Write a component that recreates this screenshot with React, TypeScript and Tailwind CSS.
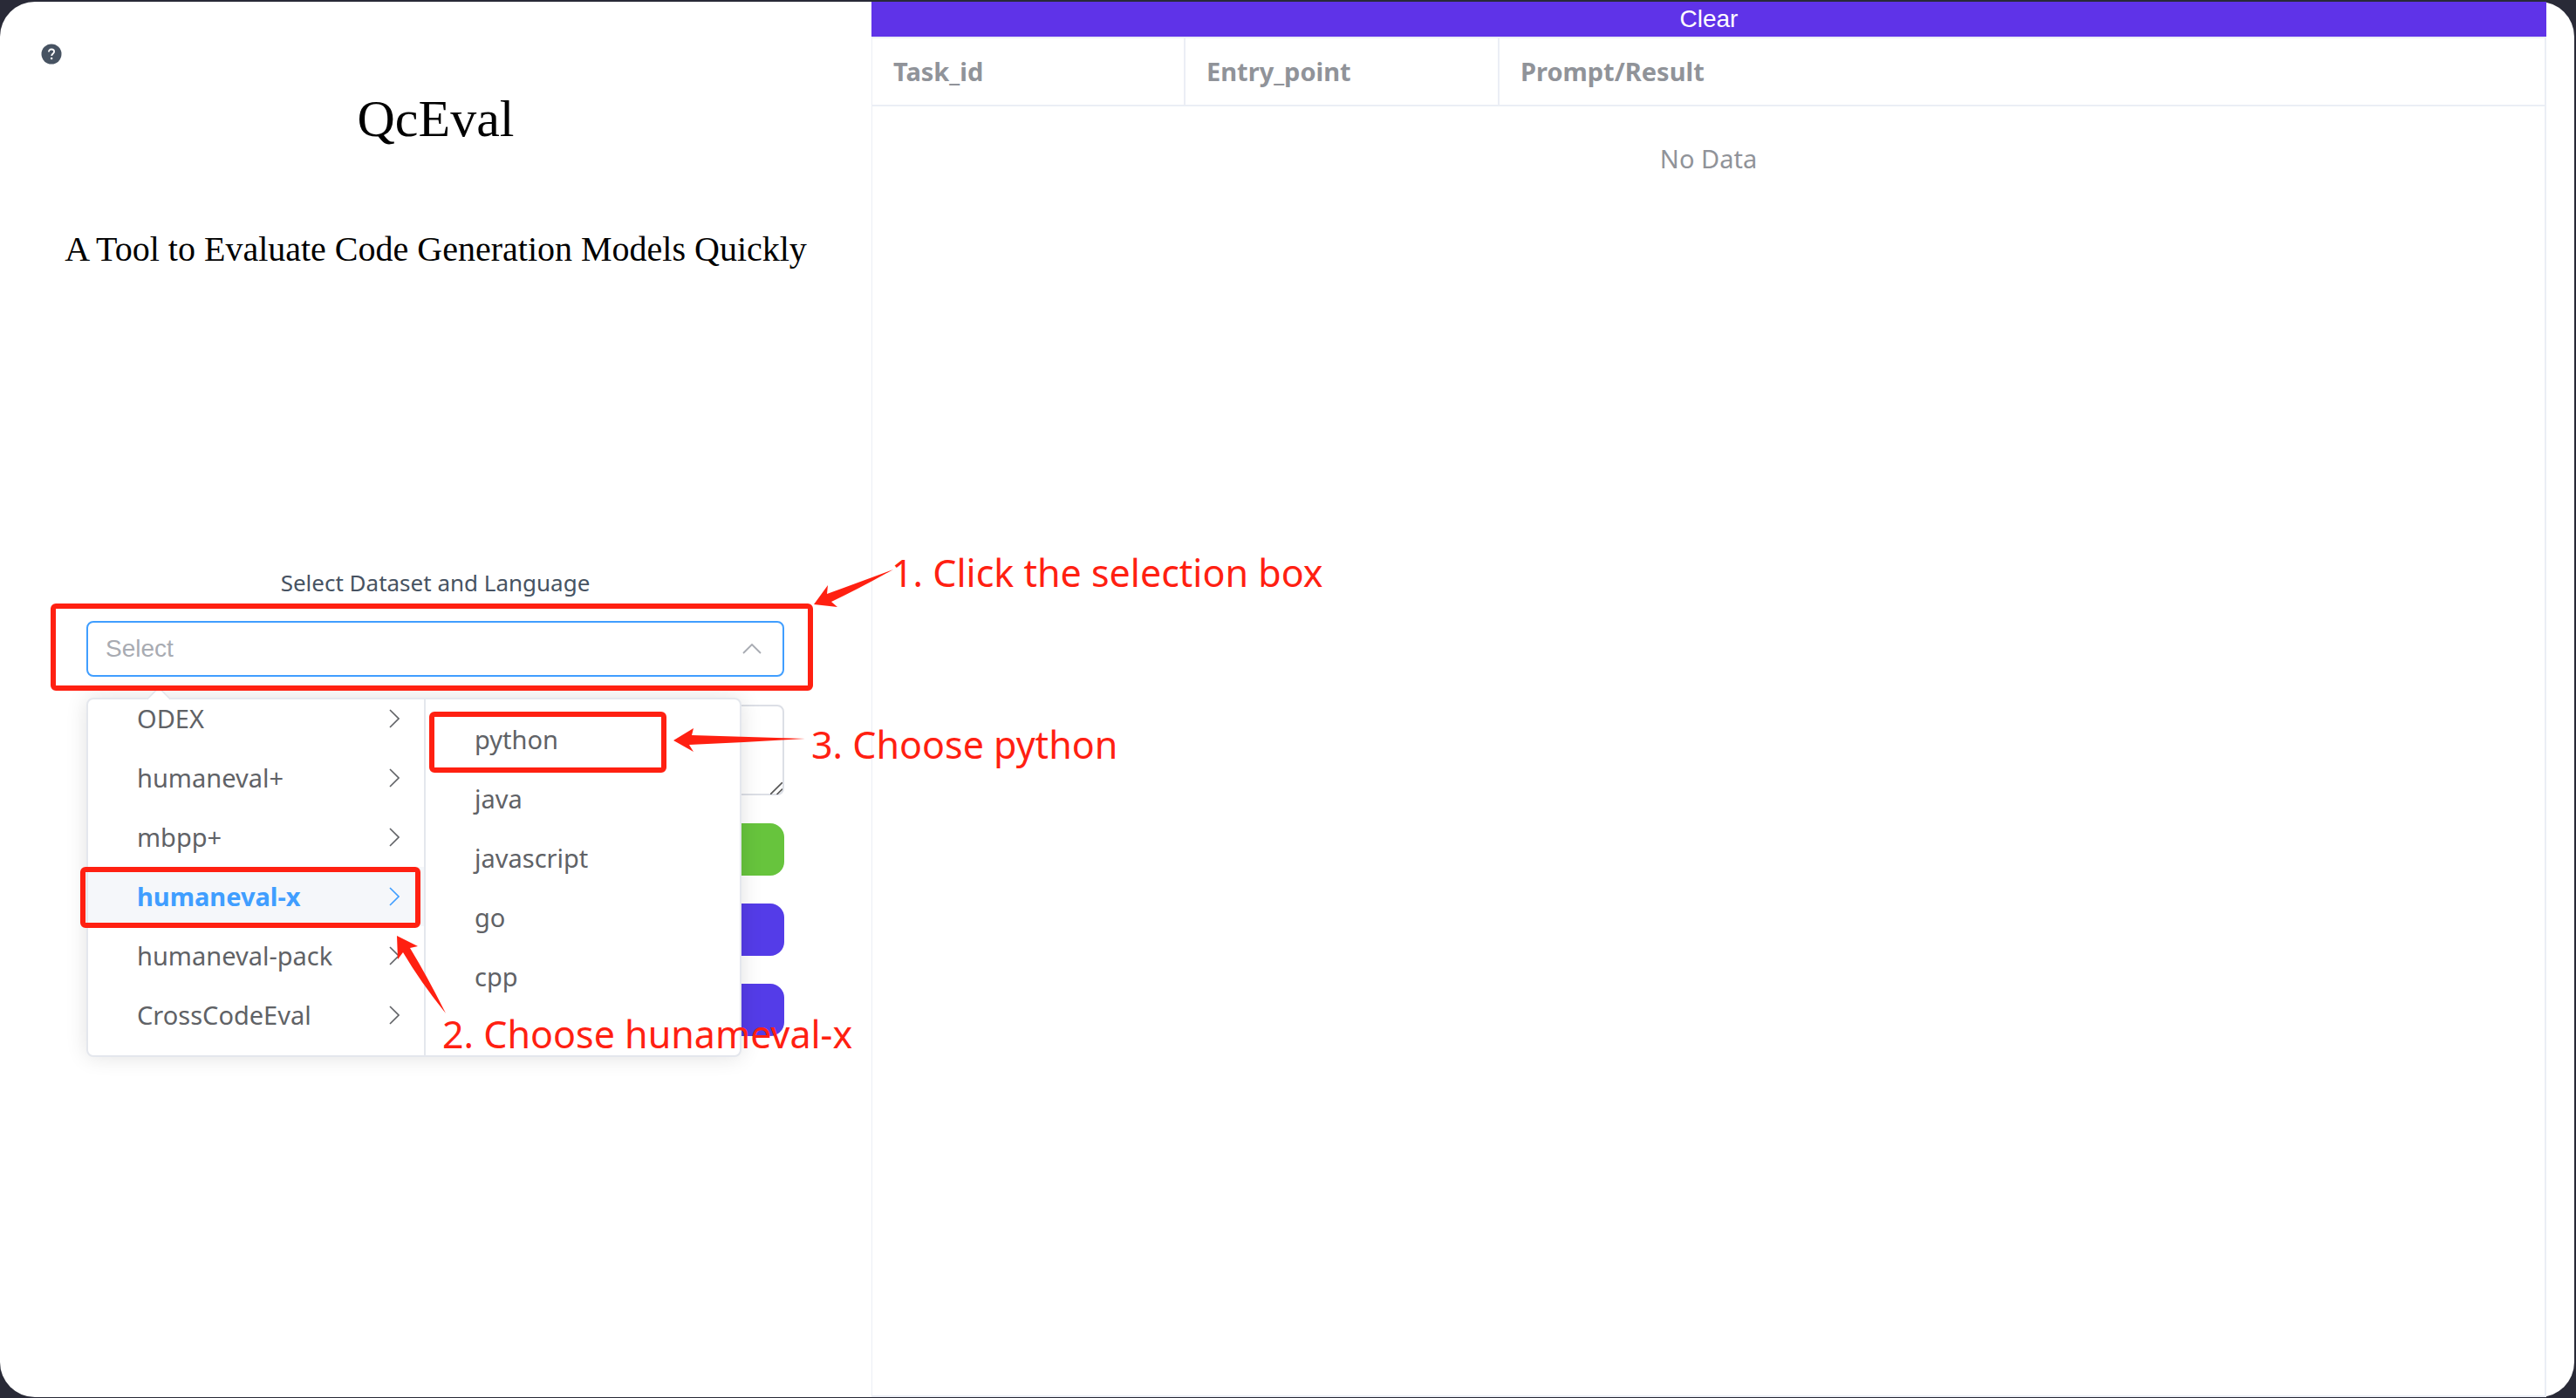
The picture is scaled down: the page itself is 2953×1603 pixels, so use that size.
import React from "react";

const datasets = ["ODEX", "humaneval+", "mbpp+", "humaneval-x", "humaneval-pack", "CrossCodeEval"];
const languages = ["python", "java", "javascript", "go", "cpp"];
const activeDataset = "humaneval-x";

function HelpIcon() {
  return (
    <svg viewBox="0 0 24 24" className="size-6" aria-hidden="true">
      <circle cx="12" cy="12" r="11.5" fill="#475362" />
      <path
        d="M8.9 9.6c0-1.9 1.3-3.1 3.1-3.1s3.1 1.1 3.1 2.8c0 2.1-2.9 2.4-2.9 4.7"
        fill="none"
        stroke="#fff"
        strokeWidth="1.8"
      />
      <circle cx="12.1" cy="17" r="1.3" fill="#fff" />
    </svg>
  );
}

function ChevronRight() {
  return (
    <svg viewBox="0 0 12 22" className="h-[22px] w-3 shrink-0" fill="none" stroke="currentColor" strokeWidth="1.6" aria-hidden="true">
      <path d="M1 1l10 10L1 21" />
    </svg>
  );
}

function ChevronUp() {
  return (
    <svg viewBox="0 0 22 12" className="h-3 w-[22px]" fill="none" stroke="#a8abb2" strokeWidth="1.8" aria-hidden="true">
      <path d="M1 11L11 1l10 10" />
    </svg>
  );
}

function Frame({ className }: { className: string }) {
  return <span aria-hidden="true" className={`pointer-events-none absolute z-20 rounded-md border-6 border-[#ff2011] ${className}`} />;
}

function Note({ className, children }: { className: string; children: React.ReactNode }) {
  return (
    <p className={`pointer-events-none absolute z-30 text-[43px] leading-[60px] whitespace-nowrap text-[#ff2011] ${className}`}>
      {children}
    </p>
  );
}

function Cascader() {
  return (
    <div className="relative">
      <Frame className="-top-5 -right-[33px] -bottom-4 -left-[41px]" />
      <svg viewBox="0 0 92 44" className="pointer-events-none absolute -top-[59px] left-[834px] z-30 h-11 w-[92px]" fill="#ff2011" aria-hidden="true">
        <path d="M0 40L16 18L15 28Q48 16 91 0Q52 22 20 37L27 43Z" />
      </svg>
      <Note className="-top-[85px] left-[923px]">1. Click the selection box</Note>

      <div className="flex h-16 items-center rounded-lg border-2 border-[#409eff] bg-white pr-6 pl-5">
        <input
          id="dataset"
          role="combobox"
          aria-expanded="true"
          aria-controls="dataset-menu"
          readOnly
          placeholder="Select"
          className="min-w-0 flex-1 bg-transparent font-['Liberation_Sans',sans-serif] text-[28px] leading-8 outline-none placeholder:text-[#a8abb2]"
        />
        <ChevronUp />
      </div>

      <div
        id="dataset-menu"
        className="absolute top-[88px] left-0 z-10 flex h-[412px] w-[751px] rounded-lg border-2 border-[#e4e7ed] bg-white text-[29px] text-[#606266] shadow-[0_0_24px_rgba(0,0,0,0.12)]"
      >
        <span aria-hidden="true" className="absolute -top-[11px] left-[71px] size-5 rotate-45 rounded-tl-sm border-t-2 border-l-2 border-[#e4e7ed] bg-white" />
        <div className="relative w-[387px] border-r-2 border-[#e4e7ed]">
          <ul className="flex h-full flex-col justify-end overflow-hidden pb-3">
            {datasets.map((name) => (
              <li key={name} className="relative shrink-0">
                <button
                  type="button"
                  className={`flex h-[68px] w-full items-center justify-between pr-7 pl-14 ${
                    name === activeDataset ? "bg-[#f5f7fa] font-bold text-[#409eff]" : ""
                  }`}
                >
                  <span>{name}</span>
                  <ChevronRight />
                </button>
              </li>
            ))}
          </ul>
          <Frame className="top-[192px] right-1 -left-[9px] h-[70px]" />
          <svg viewBox="0 0 58 92" className="pointer-events-none absolute top-[270px] left-[353px] z-30 h-[92px] w-[58px]" fill="#ff2011" aria-hidden="true">
            <path d="M1 1L25 13L16 15Q36 48 57 90Q28 54 8 20L2 28Z" />
          </svg>
          <Note className="top-[354px] left-[406px]">2. Choose hunameval-x</Note>
        </div>
        <div className="relative flex-1">
          <ul className="pt-3">
            {languages.map((name) => (
              <li key={name}>
                <button type="button" className="flex h-[68px] w-full items-center pl-14">
                  {name}
                </button>
              </li>
            ))}
          </ul>
          <Frame className="top-[14px] left-1 h-[70px] w-[272px]" />
          <svg viewBox="0 0 152 28" className="pointer-events-none absolute top-[33px] left-[284px] z-30 h-7 w-[152px]" fill="#ff2011" aria-hidden="true">
            <path d="M0 14L23 0L21 8Q86 10 151 12Q86 16 18 19L23 27Z" />
          </svg>
          <Note className="top-[22px] left-[442px]">3. Choose python</Note>
        </div>
      </div>
    </div>
  );
}

export default function App() {
  return (
    <div className="flex min-h-screen flex-col bg-[#292a37] pt-0.5 pr-0.5 pb-px font-['Noto_Sans',sans-serif]">
      <div className="grid flex-1 grid-cols-[999fr_1920fr] rounded-[40px] bg-white pr-8">
        <section className="pt-12">
          <button type="button" aria-label="Help" className="ml-[47px] block">
            <HelpIcon />
          </button>
          <div className="text-center font-['Liberation_Serif',serif] text-black">
            <h1 className="mt-[26px] text-[60px] leading-[72px]">QcEval</h1>
            <p className="mt-[90px] text-[40px] leading-12">A Tool to Evaluate Code Generation Models Quickly</p>
          </div>
          <form className="mt-[338px] pr-[100px] pl-[99px]">
            <label htmlFor="dataset" className="mb-6 block text-center text-[26px] leading-10 text-[#475362]">
              Select Dataset and Language
            </label>
            <Cascader />
            <div className="relative mt-8">
              <textarea aria-label="Model output" className="block h-[104px] w-full resize-none rounded-lg border-2 border-[#dcdfe6] bg-white" />
              <svg viewBox="0 0 14 14" className="pointer-events-none absolute right-0.5 bottom-px size-3.5" stroke="#555" strokeWidth="1.6" aria-hidden="true">
                <path d="M0 14L14 0M7.500 14L14 7.500" />
              </svg>
            </div>
            <div className="mt-8 flex flex-col gap-8">
              <button type="button" aria-label="Upload" className="h-[60px] rounded-2xl bg-[#67c43d]" />
              <button type="button" aria-label="Evaluate" className="h-[60px] rounded-2xl bg-[#543ce8]" />
              <button type="button" aria-label="Download" className="h-[60px] rounded-2xl bg-[#543ce8]" />
            </div>
          </form>
        </section>

        <main className="flex flex-col">
          <button type="button" className="h-10 bg-[#5f33e8] font-['Liberation_Sans',sans-serif] text-[28px] leading-10 text-white">
            Clear
          </button>
          <div className="flex-1 border-2 border-l border-[#ebeef5]">
            <table className="w-full table-fixed border-separate border-spacing-0 text-[29px] leading-10 text-[#909399]">
              <thead>
                <tr className="h-[78px] text-left">
                  <th className="w-[359px] border-r-2 border-b-2 border-[#ebeef5] px-6 font-bold">Task_id</th>
                  <th className="w-[360px] border-r-2 border-b-2 border-[#ebeef5] px-6 font-bold">Entry_point</th>
                  <th className="border-b-2 border-[#ebeef5] px-6 font-bold">Prompt/Result</th>
                </tr>
              </thead>
              <tbody>
                <tr className="h-[120px]">
                  <td colSpan={3} className="text-center">No Data</td>
                </tr>
              </tbody>
            </table>
          </div>
        </main>
      </div>
    </div>
  );
}
